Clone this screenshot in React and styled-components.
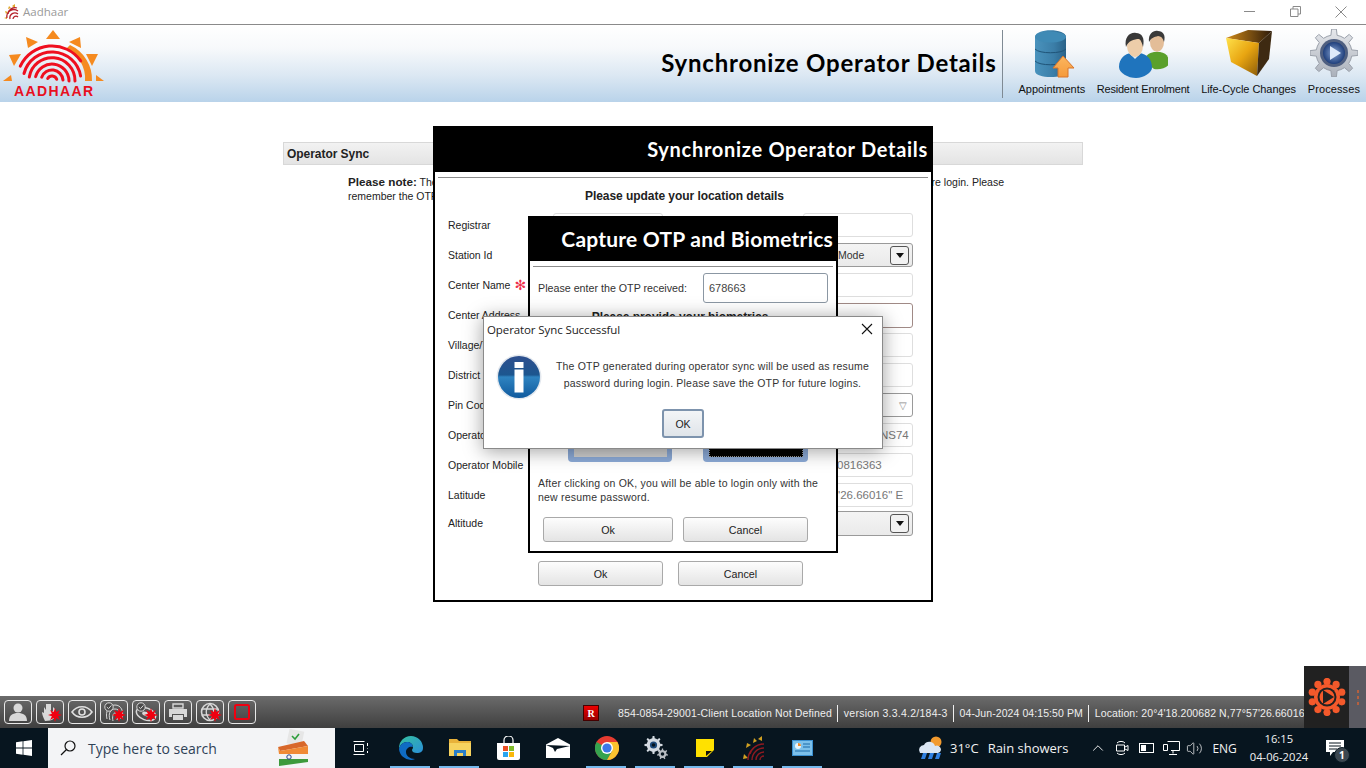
import React from "react";
import styled, { createGlobalStyle } from "styled-components";
import { ChevronUp, Volume2 } from "lucide-react";

const Global = createGlobalStyle`
  html, body { margin: 0; padding: 0; overflow: hidden; background: #fff; }
  * { box-sizing: border-box; }
  body { font-family: "Liberation Sans", Arial, sans-serif; }
`;

const Page = styled.div`
  position: relative; width: 1366px; height: 768px; display: flex; flex-direction: column; overflow: hidden;
`;
const TitleBar = styled.div`
  height: 25px; flex: none; display: flex; align-items: center; background: #fff; border-bottom: 1px solid #8a8a8a; padding: 0 2px 1px 3px;
`;
const AppTitle = styled.span`
  margin-left: 4px; font: 11.5px "Open Sans", sans-serif; color: #9a9a9a;
`;
const WinControls = styled.div`
  margin-left: auto; display: flex; align-items: center;
`;
const WinBtn = styled.div`
  width: 46px; height: 20px; display: flex; align-items: center; justify-content: center;
`;
const Header = styled.header`
  height: 77px; flex: none; display: flex; align-items: stretch; position: relative;
  background: linear-gradient(#ffffff 0%, #f7f9fb 30%, #dce8f3 65%, #b9d3ea 100%);
`;
const LogoBox = styled.div`
  width: 120px; flex: none;
`;
const HeaderTitle = styled.h1`
  margin: 0 0 2px auto; align-self: center; padding: 0 5px 0 0; font: 700 24px "Lato", sans-serif; letter-spacing: .79px; color: #000;
`;
const Divider = styled.div`
  width: 1px; margin: 5px 0 4px 0; background: #7f8a94;
`;
const Nav = styled.nav`
  display: flex; padding: 0 6px 0 16px; gap: 11.7px;
`;
const NavItem = styled.div`
  display: flex; flex-direction: column; align-items: center; justify-content: space-between; padding: 4px 0 7px; font-size: 11px; color: #111; white-space: nowrap; letter-spacing: ${p => p.$ls || 0}px;
`;
const Main = styled.main`
  flex: 1; position: relative; background: #fff; padding: 40px 0 0 283px;
`;
const Panel = styled.div`
  width: 800px; height: 23px; display: flex; align-items: center; padding-left: 3px; border: 1px solid #d8d8d8; letter-spacing: -.05px;
  background: linear-gradient(#f2f2f2, #e4e4e4); font: 700 12px "Liberation Sans", sans-serif; color: #222;
`;
const Note = styled.div`
  margin: 10px 0 0 65px; font-size: 10.5px; line-height: 14px; width: 656px; color: #222; white-space: nowrap;
  b { font-weight: 700; font-size: 11.7px; }
`;
const NoteLine = styled.div`
  display: flex; justify-content: space-between;
`;
const Dialog = styled.section`
  position: absolute; left: ${p => p.$x}px; top: ${p => p.$y}px; width: ${p => p.$w}px; height: ${p => p.$h}px;
  background: #fff; border: 2px solid #000; display: flex; flex-direction: column;
`;
const DialogHead = styled.div`
  height: ${p => p.$h}px; flex: none; background: #000; color: #fff; display: flex; align-items: center; justify-content: flex-end; padding: 0 ${p => p.$pr}px 2px 0;
  font: 700 ${p => p.$fs}px "Lato", sans-serif; letter-spacing: ${p => p.$ls}px;
`;
const Rule = styled.hr`
  margin: 5px 3px 0; border: 0; height: 1px; background: #8c8c8c; flex: none;
`;
const Center = styled.div`
  text-align: center; font: 700 12px/${p => p.$lh || 14}px "Liberation Sans", sans-serif; color: #222; letter-spacing: -.05px; margin-top: ${p => p.$mt}px;
  padding: 0 ${p => p.$pr || 0}px 0 ${p => p.$pl || 0}px; flex: none;
`;
const Form = styled.div`
  display: grid; grid-template-columns: 105px 360px; row-gap: 6px; grid-auto-rows: 24px; margin: 10px 0 0 13px; align-items: center;
`;
const Label = styled.label`
  font-size: 10.5px; color: #222; display: flex; align-items: center; gap: 4px; white-space: nowrap; margin-top: ${p => p.$mt || 0}px;
`;
const Star = styled.span`
  color: #ee2f4c; font: 700 14px/10px "DejaVu Sans", sans-serif;
`;
const FieldPair = styled.div`
  display: flex; justify-content: space-between;
`;
const Field = styled.div`
  height: ${p => p.$tall ? 25 : 24}px; width: ${p => p.$w || 360}px; border: 1px solid ${p => p.$bd || "#dedede"}; border-radius: 3px; background: #fff;
  display: flex; align-items: center; padding-left: ${p => p.$pl || 0}px; padding-right: 3px; font-size: 11.5px; color: #777; white-space: nowrap; margin-top: ${p => p.$mt || 0}px;
`;
const Combo = styled(Field)`
  border-color: #9a9a9a; background: ${p => p.$plain ? "#fff" : "linear-gradient(#f4f4f4, #eaeaea)"}; color: #333; font-size: 10.5px; justify-content: space-between;
`;
const ComboBtn = styled.span`
  width: 19px; height: 19px; border: 1px solid #555; border-radius: 3px; background: #f2f2f2; display: flex; align-items: center; justify-content: center;
  &::after { content: ""; border: 4px solid transparent; border-top: 5px solid #111; border-bottom: 0; }
`;
const HollowArrow = styled.span`
  margin-right: 2px; color: #888; font-size: 10px;
`;
const Actions = styled.div`
  display: flex; gap: ${p => p.$gap}px; margin: ${p => p.$mt}px 0 0 ${p => p.$ml}px; flex: none;
`;
const Btn = styled.button`
  width: ${p => p.$w}px; height: 25px; border: 1px solid #a9a9a9; border-radius: 3px; background: linear-gradient(#fdfdfd, #e4e4e4); font: 10.7px "Liberation Sans", sans-serif; color: #222; padding: 0;
`;
const OtpRow = styled.div`
  display: flex; align-items: center; justify-content: space-between; margin: 6px 8px 0 8px; font-size: 10.7px; color: #333; flex: none;
`;
const OtpInput = styled.div`
  width: 125px; height: 30px; border: 1px solid #8b97a3; border-radius: 3px; display: flex; align-items: center; padding-left: 5px; font-size: 11px; color: #444;
`;
const Tiles = styled.div`
  display: flex; gap: 31px; margin: 13px 0 0 38px; flex: none;
`;
const Tile = styled.div`
  width: ${p => p.$w}px; height: 124px; background: #8ba9d6; border-radius: 4px; padding: 5px 5px 5px 6px; display: flex;
`;
const TileInner = styled.div`
  flex: 1; background: ${p => p.$dark ? "#000" : "#cfcfcf"}; border: ${p => p.$dark ? "1px dotted #999" : "0"};
`;
const Para = styled.p`
  margin: 14px 8px 0; font-size: 10.5px; line-height: 14px; color: #333; letter-spacing: .2px; flex: none;
`;
const Alert = styled.section`
  position: absolute; left: 483px; top: 214px; width: 400px; height: 133px; background: #fff; border: 1px solid #8a8a8a;
  box-shadow: 0 2px 18px rgba(0,0,0,.38); display: flex; flex-direction: column;
`;
const AlertTitle = styled.div`
  display: flex; justify-content: space-between; align-items: center; height: 24px; padding: 0 9px 0 3px; font: 11.5px "Open Sans", sans-serif; letter-spacing: -.1px; color: #222; flex: none;
`;
const AlertBody = styled.div`
  display: flex; align-items: flex-start; padding: 13px 0 0 12px; flex: none;
`;
const InfoSvg = styled.svg`
  flex: none;
`;
const AlertText = styled.p`
  margin: 4px 0 0 1px; width: 340px; text-align: center; font-size: 10.5px; line-height: 17px; color: #333; letter-spacing: .2px;
`;
const OkBtn = styled.button`
  display: block; margin: 9px 0 0 178px; width: 42px; height: 29px; border: 2px solid #7d93ad; border-radius: 3px; background: linear-gradient(#f3f5f7, #dfe4e9); font: 10.5px "Liberation Sans", sans-serif; color: #222; padding: 0; flex: none;
`;
const StatusBar = styled.footer`
  height: 32px; flex: none; display: flex; align-items: center; padding: 0 0 0 4px; background: linear-gradient(#6b6b6b, #3f3f3f);
`;
const Tools = styled.div`
  display: flex; gap: 4px;
`;
const ToolBtn = styled.div`
  width: 28px; height: 24px; border: 1px solid #e8e8e8; border-radius: 4px; display: flex; align-items: center; justify-content: center; position: relative;
`;
const RedStarSvg = styled.svg`
  position: absolute; right: 1px; bottom: 1px;
`;
const StatusInfo = styled.div`
  margin-left: 327px; display: flex; align-items: center; white-space: nowrap; font-size: 10.5px; color: #eee; padding-top: 2px;
`;
const RBadge = styled.span`
  width: 16px; height: 16px; background: linear-gradient(#e00, #900); border: 1px solid #400; color: #fff; font: 700 10px "Liberation Serif", serif; display: flex; align-items: center; justify-content: center; margin-right: 19px; flex: none;
`;
const StatusItem = styled.span`
  padding: 0 5px 0 ${p => p.$first ? 0 : 6}px; height: 17px; line-height: 17px; border-left: ${p => p.$first ? 0 : "1px solid #eee"}; flex: none; letter-spacing: ${p => p.$ls}px;
`;
const Recorder = styled.aside`
  position: absolute; right: 0; top: 666px; width: 62px; height: 62px; display: flex; background: #5a5a62;
`;
const RecIcon = styled.div`
  width: 45px; background: #212121; display: flex; align-items: center; justify-content: center;
`;
const RecDots = styled.div`
  flex: 1; display: flex; flex-direction: column; gap: 3px; align-items: center; justify-content: center;
  i { width: 2px; height: 3px; background: #b5603f; }
`;
const Taskbar = styled.div`
  height: 40px; flex: none; display: flex; align-items: center; background: #07151f; color: #fff;
`;
const StartBtn = styled.div`
  width: 48px; display: flex; justify-content: center;
`;
const Search = styled.div`
  width: 287px; height: 40px; background: #f3f4f6; display: flex; align-items: center; padding-left: 12px; gap: 12px; font: 14px "Open Sans", sans-serif; color: #2f4256;
`;
const Vote = styled.div`
  margin-left: auto; margin-right: 26px; display: flex;
`;
const TaskIcons = styled.div`
  margin-left: 1px; display: flex;
`;
const TaskSlot = styled.div`
  width: ${p => p.$w || 49}px; height: 40px; display: flex; align-items: center; justify-content: center; position: relative;
  ${p => p.$on ? `&::after { content: ""; position: absolute; left: 4px; right: 5px; bottom: 0; height: 2px; background: #76b9ed; }` : ""}
`;
const Tray = styled.div`
  position: absolute; left: 918px; right: 0; bottom: 0; height: 40px; display: flex; align-items: center; font: 13px "Open Sans", sans-serif; color: #f2f2f2;
`;
const TrayText = styled.span`
  margin-left: ${p => p.$ml}px; font-size: ${p => p.$fs || 13}px; white-space: nowrap;
`;
const TrayIcon = styled.span`
  display: flex; margin-left: ${p => p.$ml}px;
`;
const Clock = styled.div`
  margin-left: 13px; width: 58px; text-align: center; font: 11.2px/18px "Open Sans", sans-serif; white-space: nowrap;
`;
const Notif = styled.div`
  margin-left: 18px; position: relative; display: flex;
`;
const NotifBadge = styled.span`
  position: absolute; left: 8px; top: 8px; width: 16px; height: 16px; border-radius: 50%; background: #3c4750; border: 1px solid #0a1a24; color: #fff; font: 700 10px/14px "Open Sans", sans-serif; text-align: center;
`;

const pol = (cx, cy, r, a) => [cx + r * Math.cos(a * Math.PI / 180), cy + r * Math.sin(a * Math.PI / 180)];
const arc = (cx, cy, r, a0, a1) => {
  const [x0, y0] = pol(cx, cy, r, a0), [x1, y1] = pol(cx, cy, r, a1);
  return `M${x0.toFixed(1)} ${y0.toFixed(1)}A${r} ${r} 0 ${a1 - a0 > 180 ? 1 : 0} 1 ${x1.toFixed(1)} ${y1.toFixed(1)}`;
};
const gear = (cx, cy, R, r, n) => {
  const pts = [];
  for (let i = 0; i < n; i++) {
    const s = 360 / n, a = i * s - 90;
    [[a - s * .5, r], [a - s * .22, r], [a - s * .13, R], [a + s * .13, R], [a + s * .22, r]].forEach(([t, q]) => pts.push(pol(cx, cy, q, t).map(v => v.toFixed(1)).join(",")));
  }
  return pts.join(" ");
};
const spikes = (cx, cy, R, r, n) => Array.from({ length: n * 2 }).map((_, i) => pol(cx, cy, i % 2 ? r : R, i * 180 / n).map(v => v.toFixed(1)).join(",")).join(" ");

const RedStar = () => (
  <RedStarSvg width="14" height="14" viewBox="0 0 14 14"><polygon points={spikes(7, 7, 7, 3.4, 8)} fill="#f00010" /></RedStarSvg>
);
const CheckBadge = () => (
  <g fill="none" stroke="#d8d8d8" strokeWidth="1"><circle cx="6" cy="5" r="4.2" fill="#4a4a4a" /><path d="M3.8 5l1.7 1.7L8.4 3.4" /></g>
);

const FingerArcs = ({ cx, cy, k = 1, w = 3 }) => (
  <g fill="none" stroke="#ef0f1f" strokeWidth={w} strokeLinecap="round">
    <path d={arc(cx, cy, 35 * k, 205, 325)} />
    <path d={arc(cx, cy, 29 * k, 195, 350)} />
    <path d={arc(cx, cy, 23 * k, 190, 360)} />
    <path d={arc(cx, cy, 17 * k, 195, 360)} />
    <path d={arc(cx, cy, 11 * k, 200, 355)} />
    <path d={arc(cx, cy, 5 * k, 210, 340)} />
  </g>
);

const Logo = () => (
  <svg width="120" height="77" viewBox="0 0 120 77">
    <g fill="#f58a1f">
      <polygon points="46,14 53,5 60,14" />
      <polygon points="26,12 38,17 28,23" />
      <polygon points="69,17 80,12 81,23" />
      <polygon points="9,30 21,29 14,41" />
      <polygon points="86,29 98,29 92,41" />
      <polygon points="3,56 11,50 12,56" />
      <polygon points="96,50 104,56 96,56" />
      <path d="M70 20A38 38 0 0 1 92 56H85A32 32 0 0 0 66 24Z" />
    </g>
    <FingerArcs cx={52} cy={56} />
    <text x="14" y="71" fill="#e8101f" fontFamily="Liberation Sans" fontWeight="700" fontSize="14" letterSpacing="1.4">AADHAAR</text>
  </svg>
);
const SmallLogo = () => (
  <svg width="16" height="17" viewBox="0 0 16 17">
    <path d="M1 15l3-1v2zM2 8l3 1-2 2zM6 3l2 2-3 1zM12 1v4l-3-2z" fill="#e0a526" />
    <g fill="none" stroke="#b5202a" strokeWidth="1.3">
      <path d="M4 15a7 7 0 0 1 11-7M7 16a5 5 0 0 1 8-5M10 16a3 3 0 0 1 5-2M5 11a7 7 0 0 1 9-6" />
    </g>
  </svg>
);
const DbIcon = () => (
  <svg width="48" height="50" viewBox="0 0 48 50">
    <defs>
      <linearGradient id="db" x1="0" x2="1"><stop offset="0" stopColor="#4a93bd" /><stop offset=".6" stopColor="#3b7ea8" /><stop offset="1" stopColor="#2a6288" /></linearGradient>
      <linearGradient id="ar" x1="0" y1="0" x2="0" y2="1"><stop offset="0" stopColor="#fbb65f" /><stop offset="1" stopColor="#f59a3b" /></linearGradient>
    </defs>
    <path d="M7 8c0-9 31-9 31 0v34c0 8-31 8-31 0z" fill="url(#db)" />
    <ellipse cx="22.5" cy="8" rx="15.5" ry="5.5" fill="#3f8ab5" />
    <path d="M7 20c4 5 27 5 31 0M7 32c4 5 27 5 31 0" fill="none" stroke="#1f5478" strokeWidth="1" />
    <path d="M30 39h-5l10-12 11 12h-6v9h-10z" fill="url(#ar)" stroke="#d9742a" strokeWidth="1" />
  </svg>
);
const PeopleIcon = () => (
  <svg width="50" height="50" viewBox="0 0 50 50">
    <path d="M27 33c0-7 4-9 9-10h6c6 1 9 4 9 12-2 4-9 6-15 5z" fill="#5aa02c" />
    <ellipse cx="39" cy="13" rx="7" ry="10" fill="#e3bd98" />
    <path d="M31 13c-1-9 5-12 9-11 5 0 8 4 6 11-1-4-3-6-6-6-4 1-7 2-9 6z" fill="#3a3a3a" />
    <path d="M1 38c0-9 6-13 12-14h8c8 1 13 6 13 15 0 4-8 10-16 10S1 44 1 38z" fill="#1f74bd" />
    <path d="M11 24l6 6 6-6-3-2h-6z" fill="#dfe9f2" />
    <ellipse cx="17" cy="17" rx="8" ry="11" fill="#edcda9" />
    <path d="M8 18c-2-10 4-15 10-14 6 0 9 5 7 14-1-4-2-7-4-8-5 0-11 2-13 8z" fill="#383838" />
  </svg>
);
const BoxIcon = () => (
  <svg width="48" height="48" viewBox="0 0 48 48">
    <defs>
      <linearGradient id="gold" x1="0" y1="0" x2="1" y2="1"><stop offset="0" stopColor="#ffe14a" /><stop offset=".5" stopColor="#e8a511" /><stop offset="1" stopColor="#8a5a08" /></linearGradient>
      <linearGradient id="top" x1="0" x2="1"><stop offset="0" stopColor="#d08a18" /><stop offset="1" stopColor="#2d1a0a" /></linearGradient>
    </defs>
    <polygon points="1,9 23,1 47,2 34,14" fill="url(#top)" />
    <polygon points="1,9 34,14 32,47 6,33" fill="url(#gold)" />
    <polygon points="34,14 47,2 44,30 32,47" fill="#3e2a12" />
  </svg>
);
const GearIcon = () => (
  <svg width="48" height="48" viewBox="0 0 48 48">
    <defs>
      <linearGradient id="gr" x1="0" y1="0" x2="0" y2="1"><stop offset="0" stopColor="#e6e8ec" /><stop offset="1" stopColor="#aab0ba" /></linearGradient>
      <radialGradient id="bl"><stop offset="0" stopColor="#8aa6d4" /><stop offset="1" stopColor="#1f3f7c" /></radialGradient>
    </defs>
    <polygon points={gear(24, 24, 24, 18, 8)} fill="url(#gr)" stroke="#9aa0aa" />
    <circle cx="24" cy="24" r="14" fill="#4f5f80" />
    <circle cx="24" cy="24" r="11" fill="url(#bl)" />
    <polygon points="20,17 31,24 20,31" fill="#dfeafa" />
  </svg>
);
const ToolIcon = ({ children }) => <svg width="22" height="20" viewBox="0 0 22 20" fill="none">{children}</svg>;
const InfoIcon = () => (
  <InfoSvg width="46" height="46" viewBox="0 0 46 46">
    <defs>
      <linearGradient id="inf" x1="0" y1="0" x2="0" y2="1"><stop offset="0" stopColor="#2e4f8e" /><stop offset=".45" stopColor="#1c568f" /><stop offset=".5" stopColor="#2f83c0" /><stop offset="1" stopColor="#0f5a9e" /></linearGradient>
    </defs>
    <circle cx="23" cy="23" r="22.5" fill="#e3e8ee" />
    <circle cx="23" cy="23" r="21" fill="url(#inf)" />
    <rect x="18.5" y="8" width="9" height="6" fill="#fff" />
    <rect x="18.5" y="15.5" width="9" height="23" fill="#fff" />
  </InfoSvg>
);
const Chrome = () => (
  <svg width="24" height="24" viewBox="0 0 24 24">
    <circle cx="12" cy="12" r="12" fill="#e53b30" />
    <path d="M12 12L1.6 6A12 12 0 0 0 12 24l5.2-9z" fill="#35a34f" />
    <path d="M12 6h10.4A12 12 0 0 1 12 24l5.2-9z" fill="#fbc22f" />
    <circle cx="12" cy="12" r="6" fill="#fff" />
    <circle cx="12" cy="12" r="4.6" fill="#3b78e7" />
  </svg>
);

export default function App() {
  return (
    <Page>
      <Global />
      <TitleBar>
        <SmallLogo />
        <AppTitle>Aadhaar</AppTitle>
        <WinControls>
          <WinBtn><svg width="11" height="11"><path d="M0 5.5h11" stroke="#8a8a8a" /></svg></WinBtn>
          <WinBtn><svg width="11" height="11" fill="none" stroke="#8a8a8a"><path d="M.5 3h7.5v7.5H.5zM3 3V.5h7.5V8H8" /></svg></WinBtn>
          <WinBtn><svg width="12" height="12" stroke="#8a8a8a"><path d="M.5.5l11 11M11.5.5l-11 11" /></svg></WinBtn>
        </WinControls>
      </TitleBar>
      <Header>
        <LogoBox><Logo /></LogoBox>
        <HeaderTitle>Synchronize Operator Details</HeaderTitle>
        <Divider />
        <Nav>
          <NavItem $ls={-0.06}><DbIcon />Appointments</NavItem>
          <NavItem $ls={-0.22}><PeopleIcon />Resident Enrolment</NavItem>
          <NavItem $ls={-0.06}><BoxIcon />Life-Cycle Changes</NavItem>
          <NavItem $ls={0.1}><GearIcon />Processes</NavItem>
        </Nav>
      </Header>
      <Main>
        <Panel>Operator Sync</Panel>
        <Note>
          <NoteLine>
            <span><b>Please note:</b> The OTP generated during operator sync</span>
            <span>will be used as your resume password before login. Please</span>
          </NoteLine>
          remember the OTP for future logins.
        </Note>

        <Dialog $x={433} $y={24} $w={500} $h={476}>
          <DialogHead $h={44} $fs={20} $pr={3} $ls={0.71}>Synchronize Operator Details</DialogHead>
          <Rule />
          <Center $mt={11} $pl={3}>Please update your location details</Center>
          <Form>
            <Label>Registrar</Label>
            <FieldPair><Field $w={110} /><Field $w={110} /></FieldPair>
            <Label>Station Id</Label>
            <Combo $pl={284}>Mode<ComboBtn /></Combo>
            <Label>Center Name <Star>✻</Star></Label>
            <Field />
            <Label>Center Address</Label>
            <Field $tall $bd="#a08a86" />
            <Label>Village/Town</Label>
            <Field />
            <Label>District</Label>
            <Field />
            <Label>Pin Code</Label>
            <Combo $plain><span /><HollowArrow>▽</HollowArrow></Combo>
            <Label>Operator Id</Label>
            <Field $pl={326}>NS74</Field>
            <Label>Operator Mobile</Label>
            <Field $pl={283}>0816363</Field>
            <Label>Latitude</Label>
            <Field $pl={284}>'26.66016" E</Field>
            <Label $mt={-4}>Altitude</Label>
            <Combo $tall $mt={-3}><span /><ComboBtn /></Combo>
          </Form>
          <Actions $gap={15} $mt={24} $ml={103}>
            <Btn $w={125}>Ok</Btn>
            <Btn $w={125}>Cancel</Btn>
          </Actions>
        </Dialog>

        <Dialog $x={528} $y={114} $w={310} $h={337}>
          <DialogHead $h={43} $fs={21} $pr={3} $ls={0.22}>Capture OTP and Biometrics</DialogHead>
          <Rule />
          <OtpRow>Please enter the OTP received:<OtpInput>678663</OtpInput></OtpRow>
          <Center $mt={7} $lh={15} $pr={6}>Please provide your biometrics</Center>
          <Tiles>
            <Tile $w={104}><TileInner /></Tile>
            <Tile $w={105}><TileInner $dark /></Tile>
          </Tiles>
          <Para>After clicking on OK, you will be able to login only with the new resume password.</Para>
          <Actions $gap={10} $mt={13} $ml={13}>
            <Btn $w={130}>Ok</Btn>
            <Btn $w={125}>Cancel</Btn>
          </Actions>
        </Dialog>

        <Alert>
          <AlertTitle>
            Operator Sync Successful
            <svg width="12" height="12" stroke="#111" strokeWidth="1.1"><path d="M1 1l10 10M11 1L1 11" /></svg>
          </AlertTitle>
          <AlertBody>
            <InfoIcon />
            <AlertText>The OTP generated during operator sync will be used as resume password during login. Please save the OTP for future logins.</AlertText>
          </AlertBody>
          <OkBtn>OK</OkBtn>
        </Alert>
      </Main>
      <StatusBar>
        <Tools>
          <ToolBtn><ToolIcon><circle cx="11" cy="6" r="4.5" fill="#d8d8d8" /><path d="M2 19c0-6 4-8 9-8s9 2 9 8z" fill="#d8d8d8" /></ToolIcon></ToolBtn>
          <ToolBtn><ToolIcon><path d="M6 19c-2-4-3-7-3-9l2 1V5l2 3V2h5v7h2V5l2 2v6c0 3-2 6-10 6z" fill="#d8d8d8" /></ToolIcon><RedStar /></ToolBtn>
          <ToolBtn><ToolIcon><path d="M1 10c5-7 15-7 20 0-5 7-15 7-20 0z" stroke="#e0e0e0" strokeWidth="1.6" /><circle cx="11" cy="10" r="3" stroke="#e0e0e0" strokeWidth="1.6" /></ToolIcon></ToolBtn>
          <ToolBtn><ToolIcon><g stroke="#d8d8d8" strokeWidth="1"><path d="M4 17c-2-8 2-14 8-14s9 6 7 13M7 18c-2-6 0-11 5-11s6 5 5 10M10 19c-1-4 0-8 2-8s3 3 2 7" /></g><CheckBadge /></ToolIcon><RedStar /></ToolBtn>
          <ToolBtn><ToolIcon><ellipse cx="11" cy="12" rx="10" ry="6" stroke="#d8d8d8" strokeWidth="1.5" transform="rotate(20 11 12)" /><ellipse cx="11" cy="12" rx="4" ry="2" fill="#d8d8d8" transform="rotate(20 11 12)" /><CheckBadge /></ToolIcon><RedStar /></ToolBtn>
          <ToolBtn><ToolIcon><path d="M6 2h10v4H6z" stroke="#d8d8d8" strokeWidth="1.4" /><path d="M2 7h18v8h-3v-3H5v3H2z" fill="#d8d8d8" /><path d="M6 13h10v5H6z" fill="#d8d8d8" /></ToolIcon></ToolBtn>
          <ToolBtn><ToolIcon><circle cx="11" cy="10" r="8.5" stroke="#d8d8d8" strokeWidth="1.6" /><path d="M3 7h16M3 13h16M11 2c-5 5-5 11 0 16M11 2c5 5 5 11 0 16" stroke="#d8d8d8" strokeWidth="1.3" /></ToolIcon><RedStar /></ToolBtn>
          <ToolBtn><ToolIcon><rect x="4" y="3" width="14" height="14" rx="1.5" stroke="#f00010" strokeWidth="2" /></ToolIcon></ToolBtn>
        </Tools>
        <StatusInfo>
          <RBadge>R</RBadge>
          <StatusItem $first $ls={0.13}>854-0854-29001-Client Location Not Defined</StatusItem>
          <StatusItem $ls={0.24}>version 3.3.4.2/184-3</StatusItem>
          <StatusItem $ls={0.08}>04-Jun-2024 04:15:50 PM</StatusItem>
          <StatusItem $ls={0.1}>Location: 20°4'18.200682 N,77°57'26.66016" E</StatusItem>
        </StatusInfo>
      </StatusBar>
      <Recorder>
        <RecIcon>
          <svg width="38" height="38" viewBox="0 0 38 38">
            {Array.from({ length: 10 }).map((_, i) => {
              const a = i * 36 - 90;
              const [x, y] = pol(19, 19, 15.5, a);
              return <circle key={i} cx={x} cy={y} r="3.6" fill="#f4592b" />;
            })}
            <circle cx="19" cy="19" r="13" fill="#f4592b" />
            <circle cx="19" cy="19" r="9.5" fill="#212121" />
            <circle cx="19" cy="19" r="7.5" fill="#f4592b" />
            <polygon points="15,12 26,19 15,26" fill="#212121" />
          </svg>
        </RecIcon>
        <RecDots><i /><i /><i /></RecDots>
      </Recorder>
      <Taskbar>
        <StartBtn>
          <svg width="16" height="16" viewBox="0 0 16 16" fill="#fff"><path d="M0 2.2l6.6-.9v6.2H0zM7.4 1.2L16 0v7.5H7.4zM0 8.4h6.6v6.3L0 13.8zM7.4 8.4H16V16l-8.6-1.2z" /></svg>
        </StartBtn>
        <Search>
          <svg width="16" height="16" viewBox="0 0 16 16" fill="none" stroke="#111" strokeWidth="1.2"><circle cx="10" cy="6" r="5" /><path d="M6.5 9.5L1 15" /></svg>
          Type here to search
          <Vote>
            <svg width="32" height="38" viewBox="0 0 32 38">
              <rect x="11" y="1" width="15" height="15" fill="#e6e6e6" transform="rotate(12 18 8)" />
              <path d="M15 7l3 3 4-5" stroke="#2e9e3c" strokeWidth="1.6" fill="none" />
              <path d="M1 18l26-6 4 5-28 5z" fill="#d8672a" />
              <path d="M1 18l2 4 28-5v8H2z" fill="#f08a35" />
              <path d="M2 25h29v5H2z" fill="#f4f4f4" />
              <path d="M2 30h29v3l-29 4z" fill="#3d9a3c" />
              <circle cx="12" cy="28" r="2.2" fill="none" stroke="#27408b" />
            </svg>
          </Vote>
        </Search>
        <TaskIcons>
          <TaskSlot $w={50}>
            <svg width="16" height="16" viewBox="0 0 16 16" fill="none" stroke="#fff"><path d="M.5 1.5h11M.5 14.5h11M1.5 4.5h9v7h-9zM14.5 3v3M14.5 8v.5M14.5 11v2" /></svg>
          </TaskSlot>
          <TaskSlot $on>
            <svg width="24" height="24" viewBox="0 0 24 24">
              <defs><linearGradient id="ed" x1="0" y1="0" x2="1" y2="1"><stop offset="0" stopColor="#35c1a0" /><stop offset="1" stopColor="#2a8fd8" /></linearGradient></defs>
              <path d="M12 0a12 12 0 0 1 12 12c0 4-3 5-6 5-3 0-5-1-5-3 0-1 1-1 1-3 0-3-3-5-6-5-4 0-7 3-8 7A12 12 0 0 1 12 0z" fill="url(#ed)" />
              <path d="M0 13c1-4 4-7 8-7 3 0 6 2 6 5-3-1-7 1-7 5 0 4 4 7 9 7-1.5.6-3 1-4 1A12 12 0 0 1 0 13z" fill="#0f6cc4" />
            </svg>
          </TaskSlot>
          <TaskSlot $on>
            <svg width="22" height="20" viewBox="0 0 22 20">
              <path d="M0 1h8l2 2h12v15H0z" fill="#e8b23a" /><path d="M0 5h22v13H0z" fill="#f6d35f" />
              <path d="M5 18v-6h12v6h-3v-3H8v3z" fill="#2a7fc9" />
            </svg>
          </TaskSlot>
          <TaskSlot>
            <svg width="23" height="24" viewBox="0 0 23 24">
              <path d="M7 7V4a4.5 4 0 0 1 9 0v3" fill="none" stroke="#fff" strokeWidth="1.2" />
              <path d="M0 7h23v15a2 2 0 0 1-2 2H2a2 2 0 0 1-2-2z" fill="#fff" />
              <rect x="6" y="10" width="5" height="5" fill="#ea4f25" /><rect x="12" y="10" width="5" height="5" fill="#7fbb2a" />
              <rect x="6" y="16" width="5" height="5" fill="#2aa4ef" /><rect x="12" y="16" width="5" height="5" fill="#fab80a" />
            </svg>
          </TaskSlot>
          <TaskSlot>
            <svg width="24" height="20" viewBox="0 0 24 20"><path d="M12 0l12 6.5V20H0V6.5z" fill="#fff" /><path d="M0 7l24 1-13 3-2 3-2-4z" fill="#07151f" /></svg>
          </TaskSlot>
          <TaskSlot $on><Chrome /></TaskSlot>
          <TaskSlot $on>
            <svg width="24" height="24" viewBox="0 0 24 24">
              <polygon points={gear(9.5, 9, 9, 6.8, 8)} fill="#d5dbe2" />
              <circle cx="9.5" cy="9" r="3.6" fill="#1e4a7a" /><circle cx="9.5" cy="9" r="1.8" fill="#07151f" />
              <polygon points={gear(18.5, 18, 5.5, 4, 7)} fill="#b7bcc2" /><circle cx="18.5" cy="18" r="1.8" fill="#07151f" />
            </svg>
          </TaskSlot>
          <TaskSlot $on>
            <svg width="18" height="18" viewBox="0 0 18 18"><path d="M0 0h18v11l-7 7H0z" fill="#ffe100" /><path d="M10 17v-5h6z" fill="#111" /></svg>
          </TaskSlot>
          <TaskSlot $on>
            <svg width="23" height="24" viewBox="0 0 23 24">
              <path d="M20 0v5l-4-2zM12 2l3 3-4 2zM5 7l4 2-5 3zM1 23l1-5 4 4z" fill="#d0a022" />
              <g fill="none" stroke="#8f1a20" strokeWidth="1.4"><path d="M6 24a16 16 0 0 1 16-16M10 24a12 12 0 0 1 12-12M14 24a8 8 0 0 1 8-8M18 24a4 4 0 0 1 4-4M8 18a15 15 0 0 1 12-10" /></g>
            </svg>
          </TaskSlot>
          <TaskSlot $on>
            <svg width="22" height="16" viewBox="0 0 22 16"><rect width="21" height="16" fill="#3a8fd0" /><rect x="1" y="1" width="19" height="14" fill="#7cc0ea" /><circle cx="6" cy="6" r="3" fill="#e8f4fb" /><path d="M6 6V3a3 3 0 0 1 3 3z" fill="#f08a2a" /><path d="M11 4h7M11 7h7M3 11h15" stroke="#1d6aa8" /></svg>
          </TaskSlot>
        </TaskIcons>
        <Tray>
          <svg width="24" height="24" viewBox="0 0 24 24">
            <circle cx="18" cy="6" r="5.5" fill="#f29a2e" />
            <path d="M2 17a5 5 0 0 1 4-8 6 6 0 0 1 11 1 4 4 0 0 1 5 6l-2 1z" fill="#dbe6f3" />
            <path d="M5 17l-2 6 4 0 2-6zM12 17l-2 6 4 0 2-6zM19 17l-2 6 4 0 2-6z" fill="#2f7fe0" />
          </svg>
          <TrayText $ml={8}>31°C</TrayText>
          <TrayText $ml={9}>Rain showers</TrayText>
          <TrayIcon $ml={21}><ChevronUp size={18} strokeWidth={1.2} color="#fff" /></TrayIcon>
          <TrayIcon $ml={9}>
            <svg width="13" height="16" viewBox="0 0 13 16" fill="none" stroke="#fff"><path d="M1 3a5 4 0 0 1 8 0M1 13a5 4 0 0 0 8 0M.5 5h8v6h-8zM9 7l3-1.5v5L9 9" /></svg>
          </TrayIcon>
          <TrayIcon $ml={10}>
            <svg width="16" height="10" viewBox="0 0 16 10" fill="none" stroke="#fff"><rect x=".5" y=".5" width="14" height="9" /><rect x="2" y="2" width="5" height="6" fill="#fff" stroke="none" /></svg>
          </TrayIcon>
          <TrayIcon $ml={8}>
            <svg width="17" height="14" viewBox="0 0 17 14" fill="none" stroke="#fff"><path d="M4.5.5h12v9H8M.5 3.5h4v6h-4zM10 9.5v3M6 13.5h8" /></svg>
          </TrayIcon>
          <TrayIcon $ml={6}><Volume2 size={17} strokeWidth={1} color="#fff" /></TrayIcon>
          <TrayText $ml={9} $fs={12}>ENG</TrayText>
          <Clock>16:15<br />04-06-2024</Clock>
          <Notif>
            <svg width="18" height="18" viewBox="0 0 18 18"><path d="M0 1h18v12H7l-3 4v-4H0z" fill="#fff" /><path d="M3 4h12M3 7h12M3 10h8" stroke="#07151f" /></svg>
            <NotifBadge>1</NotifBadge>
          </Notif>
        </Tray>
      </Taskbar>
    </Page>
  );
}
